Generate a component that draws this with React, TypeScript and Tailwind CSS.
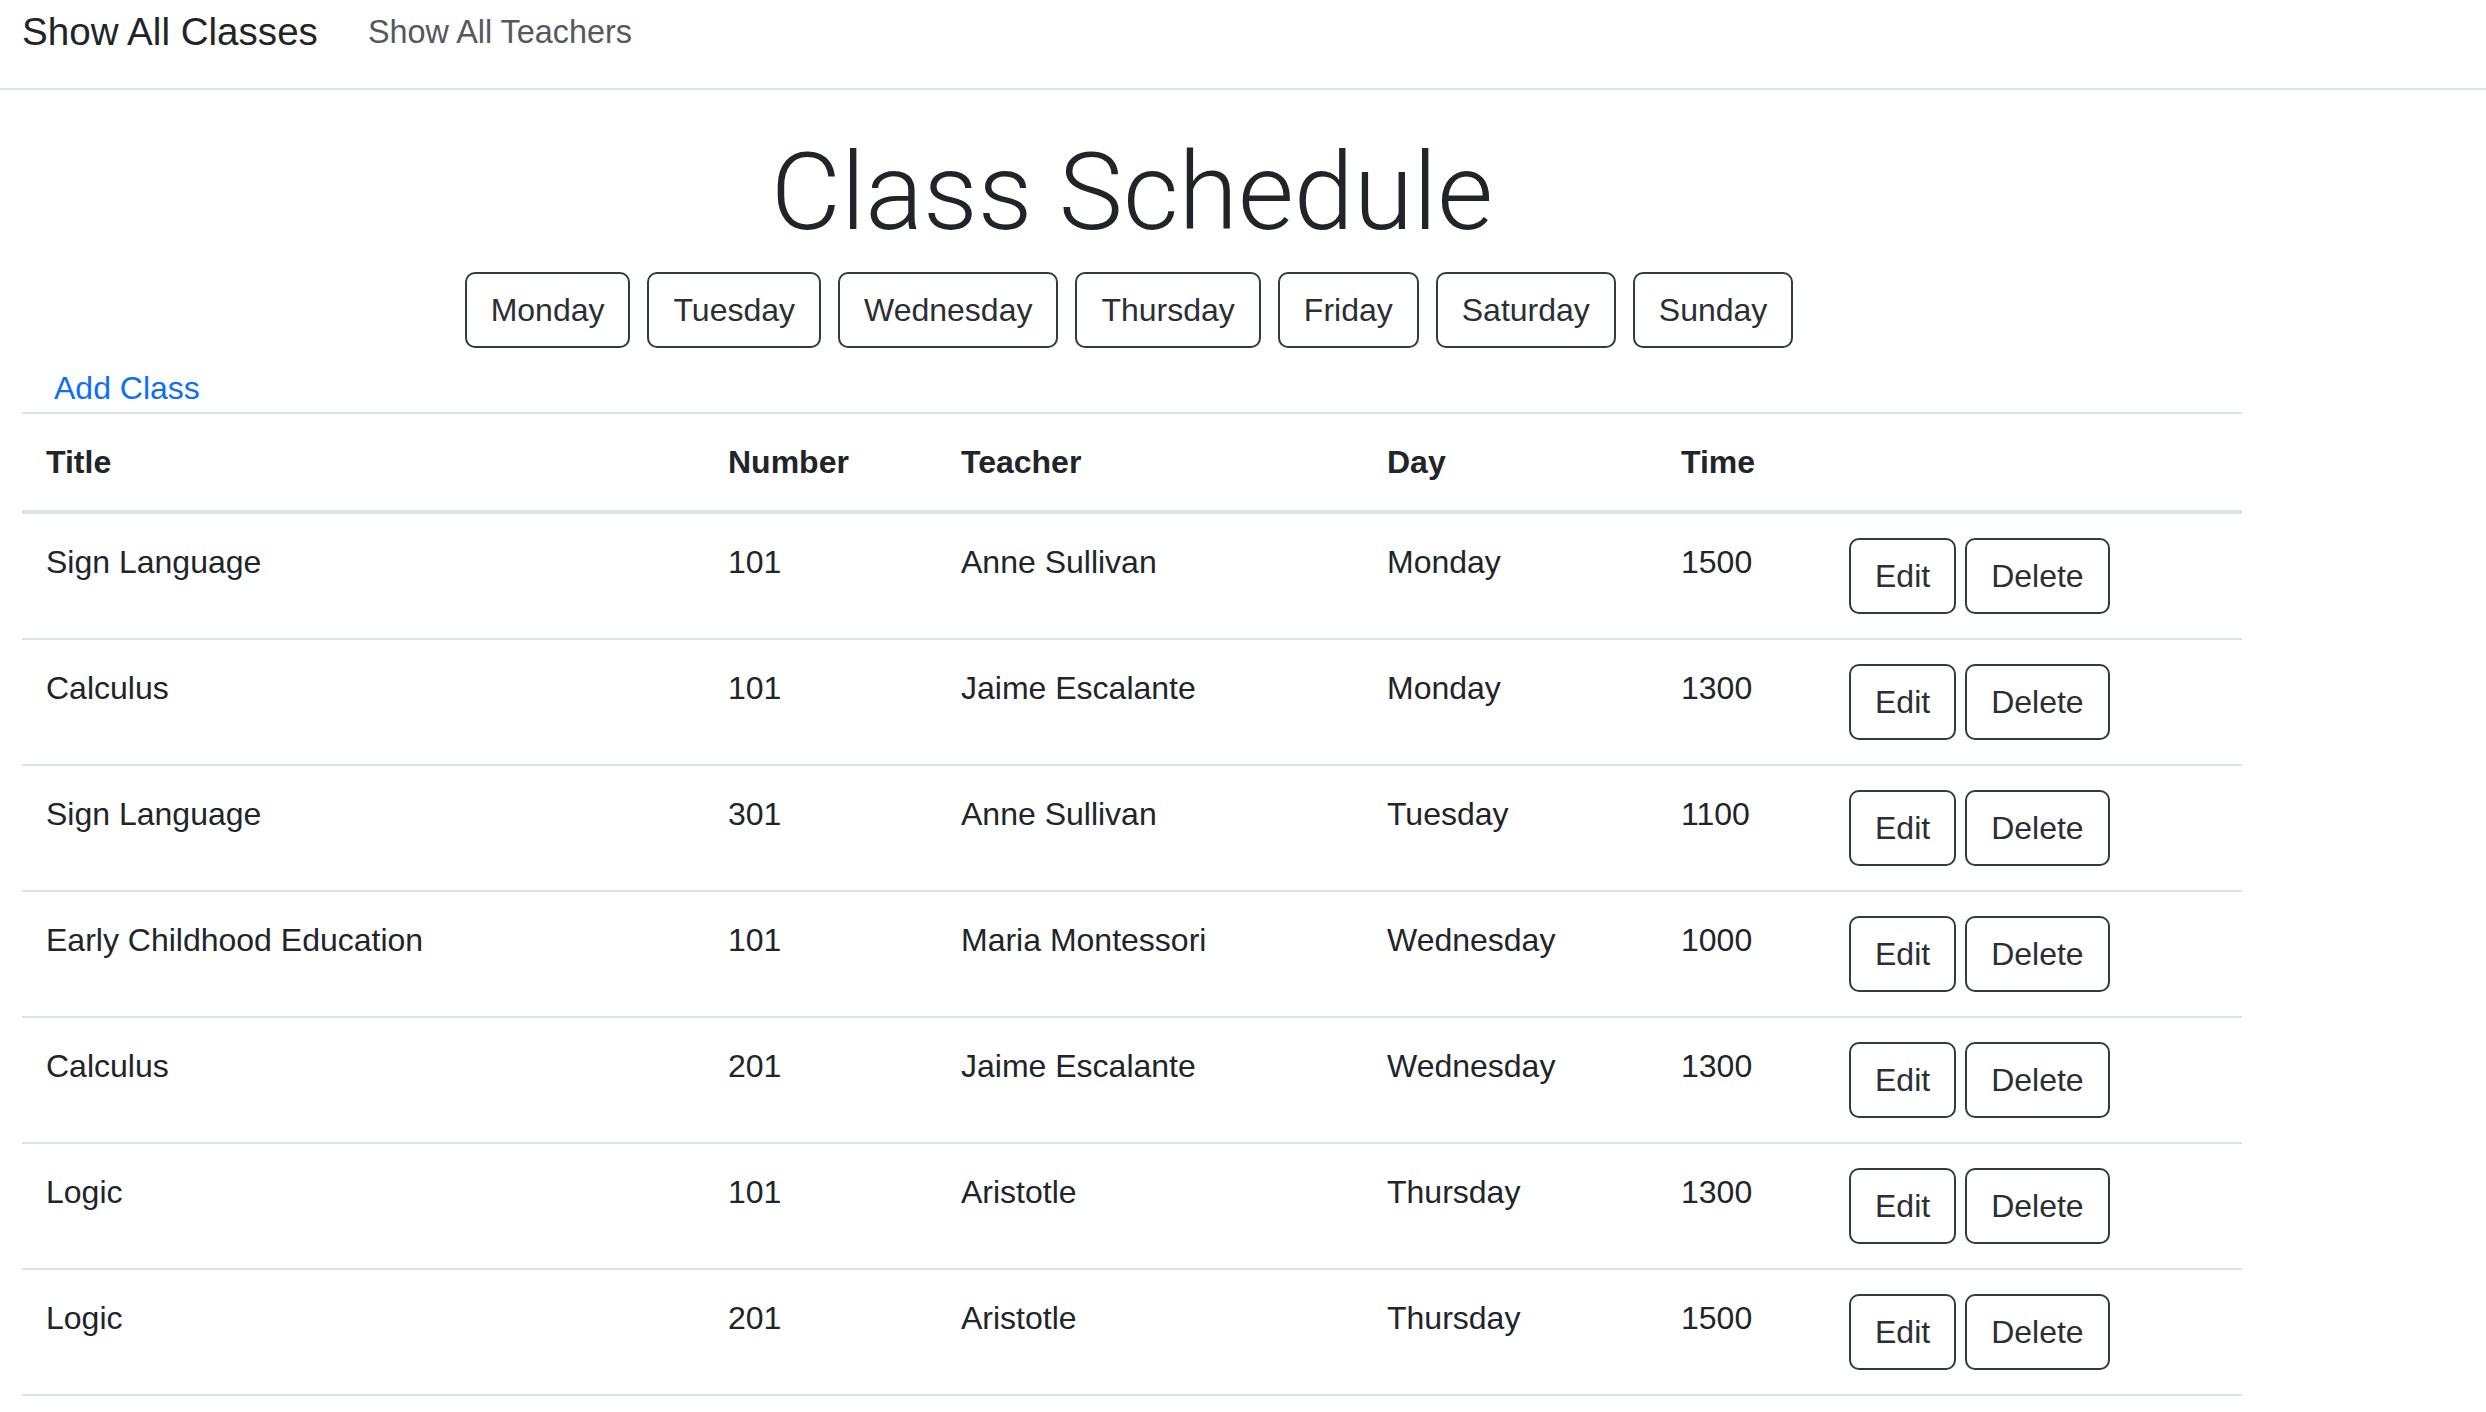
const classes = [
  { title: "Sign Language", number: "101", teacher: "Anne Sullivan", day: "Monday", time: "1500" },
  { title: "Calculus", number: "101", teacher: "Jaime Escalante", day: "Monday", time: "1300" },
  { title: "Sign Language", number: "301", teacher: "Anne Sullivan", day: "Tuesday", time: "1100" },
  { title: "Early Childhood Education", number: "101", teacher: "Maria Montessori", day: "Wednesday", time: "1000" },
  { title: "Calculus", number: "201", teacher: "Jaime Escalante", day: "Wednesday", time: "1300" },
  { title: "Logic", number: "101", teacher: "Aristotle", day: "Thursday", time: "1300" },
  { title: "Logic", number: "201", teacher: "Aristotle", day: "Thursday", time: "1500" },
];

const days = ["Monday", "Tuesday", "Wednesday", "Thursday", "Friday", "Saturday", "Sunday"];

const btn =
  "h-[76px] rounded-[10px] border-2 border-[#343a40] bg-white px-[24px] text-[32px] leading-[48px] text-[#2b2f33]";

export default function App() {
  return (
    <div className="min-h-screen bg-white font-['Liberation_Sans',Arial,sans-serif] text-[#212529]">
      <nav className="flex h-[90px] items-start border-b-2 border-[#dee2e6] pl-[22px] pt-[7px]">
        <div className="flex items-center gap-[50px]">
          <a className="text-[38.6px] leading-[50px] text-[#212529]">Show All Classes</a>
          <a className="text-[32.4px] leading-[50px] text-[#55595c]">Show All Teachers</a>
        </div>
      </nav>

      <main className="ml-[22px] w-[2220px]">
        <h1 className="mt-[37px] text-center font-['Roboto',sans-serif] text-[108px] font-light leading-[130px]">
          Class Schedule
        </h1>

        <div className="mt-[15px] flex justify-center gap-[17px] pr-[6px]">
          {days.map((d) => (
            <button key={d} className={btn}>
              {d}
            </button>
          ))}
        </div>

        <div className="mt-[16px] pl-[32px] text-[32px] leading-[48px]">
          <a className="text-[#0d6efd]">Add Class</a>
        </div>

        <table className="w-[2220px] table-fixed border-collapse text-left text-[32px] leading-[48px]">
          <colgroup>
            <col className="w-[682px]" />
            <col className="w-[233px]" />
            <col className="w-[426px]" />
            <col className="w-[294px]" />
            <col className="w-[168px]" />
            <col className="w-[417px]" />
          </colgroup>
          <thead>
            <tr className="border-t-2 border-b-4 border-[#dee2e6]">
              <th className="p-[24px] font-bold">Title</th>
              <th className="p-[24px] font-bold">Number</th>
              <th className="p-[24px] font-bold">Teacher</th>
              <th className="p-[24px] font-bold">Day</th>
              <th className="p-[24px] font-bold">Time</th>
              <th className="p-[24px]"></th>
            </tr>
          </thead>
          <tbody>
            {classes.map((c, i) => (
              <tr key={i} className="border-b-2 border-[#dee2e6]">
                <td className="p-[24px] align-top">{c.title}</td>
                <td className="p-[24px] align-top">{c.number}</td>
                <td className="p-[24px] align-top">{c.teacher}</td>
                <td className="p-[24px] align-top">{c.day}</td>
                <td className="p-[24px] align-top">{c.time}</td>
                <td className="p-[24px] align-top">
                  <div className="flex gap-[9px]">
                    <button className={btn}>Edit</button>
                    <button className={btn}>Delete</button>
                  </div>
                </td>
              </tr>
            ))}
          </tbody>
        </table>
      </main>
    </div>
  );
}
